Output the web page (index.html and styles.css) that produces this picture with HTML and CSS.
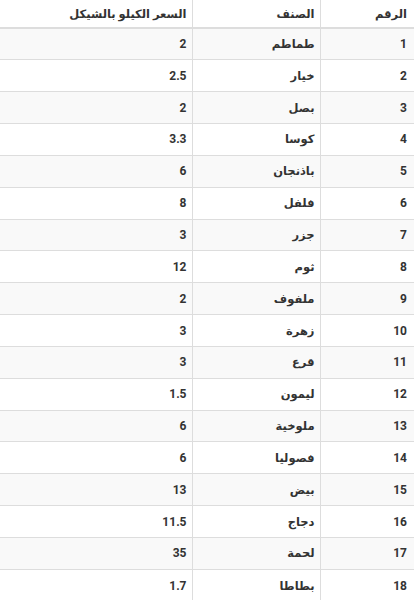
FILE: index.html
```html
<!DOCTYPE html>
<html lang="ar" dir="rtl">
<head>
<meta charset="utf-8">
<link rel="stylesheet" href="styles.css">
</head>
<body>
<table class="prices">
  <thead>
    <tr><th class="c-num ar">الرقم</th><th class="c-item ar">الصنف</th><th class="c-price ar">السعر الكيلو بالشيكل</th></tr>
  </thead>
  <tbody>
    <tr><td class="c-num">1</td><td class="c-item ar">طماطم</td><td class="c-price">2</td></tr>
    <tr><td class="c-num">2</td><td class="c-item ar">خيار</td><td class="c-price">2.5</td></tr>
    <tr><td class="c-num">3</td><td class="c-item ar">بصل</td><td class="c-price">2</td></tr>
    <tr><td class="c-num">4</td><td class="c-item ar">كوسا</td><td class="c-price">3.3</td></tr>
    <tr><td class="c-num">5</td><td class="c-item ar">باذنجان</td><td class="c-price">6</td></tr>
    <tr><td class="c-num">6</td><td class="c-item ar">فلفل</td><td class="c-price">8</td></tr>
    <tr><td class="c-num">7</td><td class="c-item ar">جزر</td><td class="c-price">3</td></tr>
    <tr><td class="c-num">8</td><td class="c-item ar">ثوم</td><td class="c-price">12</td></tr>
    <tr><td class="c-num">9</td><td class="c-item ar">ملفوف</td><td class="c-price">2</td></tr>
    <tr><td class="c-num">10</td><td class="c-item ar">زهرة</td><td class="c-price">3</td></tr>
    <tr><td class="c-num">11</td><td class="c-item ar">قرع</td><td class="c-price">3</td></tr>
    <tr><td class="c-num">12</td><td class="c-item ar">ليمون</td><td class="c-price">1.5</td></tr>
    <tr><td class="c-num">13</td><td class="c-item ar">ملوخية</td><td class="c-price">6</td></tr>
    <tr><td class="c-num">14</td><td class="c-item ar">فصوليا</td><td class="c-price">6</td></tr>
    <tr><td class="c-num">15</td><td class="c-item ar">بيض</td><td class="c-price">13</td></tr>
    <tr><td class="c-num">16</td><td class="c-item ar">دجاج</td><td class="c-price">11.5</td></tr>
    <tr><td class="c-num">17</td><td class="c-item ar">لحمة</td><td class="c-price">35</td></tr>
    <tr><td class="c-num">18</td><td class="c-item ar">بطاطا</td><td class="c-price">1.7</td></tr>
  </tbody>
</table>
</body>
</html>
```
FILE: styles.css
```css
html, body {
  margin: 0;
  padding: 0;
  background: #fff;
}
body {
  font-family: Roboto, "DejaVu Sans", sans-serif;
  font-size: 12px;
  font-weight: bold;
  color: #333;
  direction: rtl;
}
.prices {
  width: 414px;
  border-collapse: collapse;
  table-layout: fixed;
}
.prices th,
.prices td {
  text-align: right;
  padding: 0 5px;
  vertical-align: middle;
  white-space: nowrap;
}
.prices .ar {
  font-size: 11.5px;
}
.prices th {
  height: 28px;
  border-bottom: 2px solid #ddd;
}
.prices td {
  height: 31.85px;
  border-top: 1px solid #ddd;
}
.prices .c-num {
  width: 94px;
  padding-right: 7px;
  box-sizing: border-box;
  border-left: 1px solid #ddd;
}
.prices .c-item {
  width: 128px;
  box-sizing: border-box;
  border-left: 1px solid #ddd;
}
.prices .c-price {
  box-sizing: border-box;
}
.prices tbody tr:nth-child(odd) td {
  background: #f9f9f9;
}
```
